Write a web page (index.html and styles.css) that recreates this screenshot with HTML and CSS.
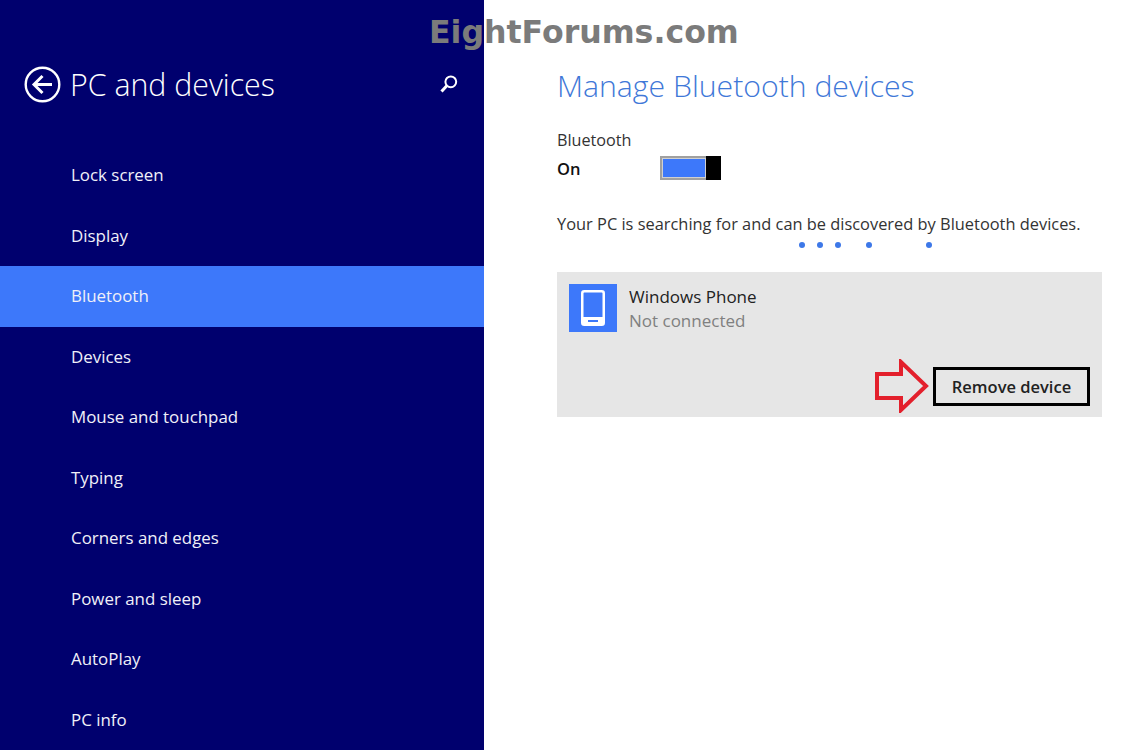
FILE: index.html
```html
<!DOCTYPE html>
<html lang="en">
<head>
    <meta charset="UTF-8">
    <title>PC and devices</title>
    <link rel="stylesheet" href="styles.css">
</head>
<body>
    <div class="watermark">EightForums.com</div>
    <div class="sidebar">
        <div class="side-header">
            <svg class="back-icon" width="38" height="38" viewBox="0 0 38 38">
                <circle cx="18.5" cy="18.5" r="16.8" fill="none" stroke="#fff" stroke-width="2.4"/>
                <path d="M10 18.5H28M18.5 10L10 18.5L18.5 27" fill="none" stroke="#fff" stroke-width="3"/>
            </svg>
            <h1>PC and devices</h1>
            <svg class="search-icon" width="20" height="20" viewBox="0 0 20 20">
                <circle cx="11.8" cy="7.8" r="5.4" fill="none" stroke="#fff" stroke-width="2"/>
                <path d="M8 11.6L2.5 17.5" fill="none" stroke="#fff" stroke-width="3"/>
            </svg>
        </div>
        <div class="menu">
            <div class="menu-item">Lock screen</div>
            <div class="menu-item">Display</div>
            <div class="menu-item active">Bluetooth</div>
            <div class="menu-item">Devices</div>
            <div class="menu-item">Mouse and touchpad</div>
            <div class="menu-item">Typing</div>
            <div class="menu-item">Corners and edges</div>
            <div class="menu-item">Power and sleep</div>
            <div class="menu-item">AutoPlay</div>
            <div class="menu-item">PC info</div>
        </div>
    </div>
    <div class="content">
        <h2>Manage Bluetooth devices</h2>
        <div class="toggle-label">Bluetooth</div>
        <div class="toggle-row">
            <span class="toggle-state">On</span>
            <div class="toggle"><div class="toggle-fill"></div><div class="toggle-thumb"></div></div>
        </div>
        <p class="status">Your PC is searching for and can be discovered by Bluetooth devices.</p>
        <div class="dots">
            <span class="dot"></span>
            <span class="dot"></span>
            <span class="dot"></span>
            <span class="dot dot-b"></span>
            <span class="dot dot-c"></span>
        </div>
        <div class="device">
            <div class="device-info">
                <div class="device-icon">
                    <svg width="24" height="36" viewBox="0 0 24 36">
                        <rect x="1.25" y="1.25" width="21.5" height="33.5" rx="2" fill="none" stroke="#fff" stroke-width="2.5"/>
                        <rect x="1" y="27" width="22" height="8" fill="#fff"/>
                        <rect x="7" y="30" width="10" height="2" fill="#3d78fa"/>
                    </svg>
                </div>
                <div class="device-text">
                    <div class="device-name">Windows Phone</div>
                    <div class="device-status">Not connected</div>
                </div>
            </div>
            <div class="device-actions">
                <svg class="arrow" width="54" height="54" viewBox="0 0 54 54">
                    <path d="M2 15H26V3L51 27L26 51V39H2Z" fill="none" stroke="#e3202c" stroke-width="4"/>
                </svg>
                <button class="remove">Remove device</button>
            </div>
        </div>
    </div>
</body>
</html>
```

FILE: styles.css
```css
body {
    margin: 0;
    width: 1125px;
    height: 750px;
    overflow: hidden;
    display: flex;
    font-family: "Open Sans", sans-serif;
    background-color: #fff;
    position: relative;
}
.watermark {
    position: absolute;
    left: 429px;
    top: 14px;
    font-family: "DejaVu Sans", sans-serif;
    font-weight: bold;
    font-size: 31.6px;
    color: #7b7b7b;
    white-space: nowrap;
}
.sidebar {
    width: 484px;
    height: 750px;
    background-color: #00006e;
    color: #fff;
    flex-shrink: 0;
}
.side-header {
    height: 145px;
    box-sizing: border-box;
    padding: 66px 24px 0 24px;
    display: flex;
    align-items: flex-start;
}
.back-icon {
    margin-right: 8px;
}
h1 {
    margin: 0;
    font-size: 30.3px;
    line-height: 38px;
    font-weight: 300;
    flex-grow: 1;
}
.search-icon {
    margin-top: 8px;
    margin-right: 1px;
}
.menu-item {
    height: 60.5px;
    line-height: 59px;
    padding-left: 71px;
    font-size: 16.9px;
    color: #f0f0f8;
}
.active {
    background-color: #3d78fa;
}
.content {
    padding: 0 23px 0 73px;
    flex-grow: 1;
    color: #333;
}
h2 {
    margin: 66px 0 0 0;
    font-size: 30.2px;
    line-height: 40px;
    font-weight: 300;
    color: #3f78d8;
}
.toggle-label {
    margin-top: 22px;
    font-size: 16.2px;
    line-height: 24px;
}
.toggle-row {
    display: flex;
    align-items: center;
    height: 26px;
    margin-top: 3px;
}
.toggle-state {
    width: 103px;
    font-size: 16.5px;
    font-weight: 600;
    color: #111;
}
.toggle {
    width: 61px;
    height: 24px;
    box-sizing: border-box;
    display: flex;
}
.toggle-fill {
    flex-grow: 1;
    border: 2px solid #a0a0a0;
    border-right: 0;
    background-color: #3d78fa;
    box-shadow: inset 0 0 0 1px #d0d0d0;
}
.toggle-thumb {
    width: 15px;
    background-color: #000;
}
.status {
    margin: 31px 0 0 0;
    font-size: 16.4px;
    line-height: 24px;
    white-space: nowrap;
}
.dots {
    height: 6px;
    margin-top: 6px;
    display: flex;
    gap: 12px;
    padding-left: 242px;
}
.dot {
    width: 6px;
    height: 6px;
    border-radius: 50%;
    background-color: #3d78e8;
}
.dot-b {
    margin-left: 13px;
}
.dot-c {
    margin-left: 42px;
}
.device {
    margin-top: 24px;
    width: 545px;
    height: 145px;
    box-sizing: border-box;
    padding: 12px 12px 0 12px;
    background-color: #e6e6e6;
}
.device-info {
    display: flex;
    gap: 12px;
}
.device-icon {
    width: 48px;
    height: 48px;
    background-color: #3d78fa;
    display: flex;
    align-items: center;
    justify-content: center;
}
.device-text {
    padding-top: 1px;
}
.device-name {
    font-size: 17px;
    line-height: 24px;
    color: #222;
}
.device-status {
    font-size: 17px;
    line-height: 24px;
    color: #808080;
}
.device-actions {
    display: flex;
    justify-content: flex-end;
    align-items: center;
    margin-top: 26px;
}
.arrow {
    margin-right: 4px;
}
.remove {
    width: 157px;
    height: 39px;
    box-sizing: border-box;
    border: 3px solid #000;
    background-color: #e6e6e6;
    font-family: "Open Sans", sans-serif;
    font-size: 16.5px;
    font-weight: 600;
    color: #222;
    padding: 0;
}
```
